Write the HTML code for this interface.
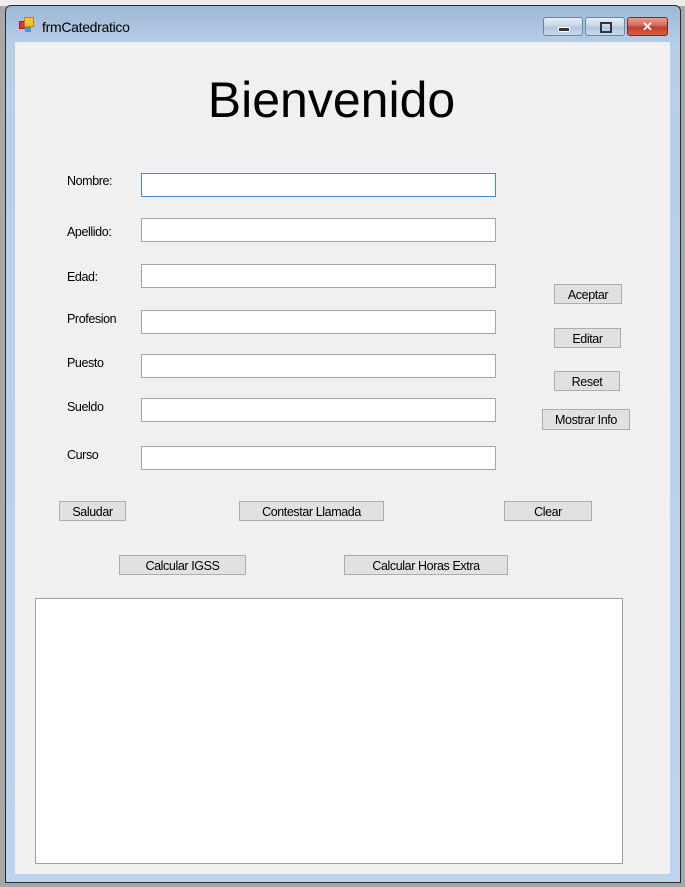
<!DOCTYPE html><html><head><style>
body{margin:0;width:685px;height:887px;background:#a8a8a8;position:relative;overflow:hidden;font-family:"Liberation Sans",Arial,sans-serif}
.top{position:absolute;left:0;top:0;width:685px;height:6px;background:#ececec}
.win{position:absolute;left:5px;top:5px;width:674px;height:876px;border:1px solid #2a2a2a;border-radius:6px 6px 0 0;background:linear-gradient(#9db8d6 0,#b8cfe8 40px,#b7d0ea 150px,#bcd4ed 100%)}
.cl{position:absolute;left:15px;top:42px;width:655px;height:832px;background:#f0f0f0}
.a{position:absolute}
.lbl{position:absolute;font-size:12.5px;color:#000;letter-spacing:-0.4px}
.tb{position:absolute;left:141px;width:353px;height:22px;background:#fff;border:1px solid #a5a5a5}
.btn{position:absolute;background:#e1e1e1;border:1px solid #adadad;box-sizing:border-box;font-size:12.5px;letter-spacing:-0.4px;text-align:center;line-height:20px;color:#000}
.wb{position:absolute;top:17px;height:19px;border:1px solid #6d84a3;border-radius:3px;box-sizing:border-box;background:linear-gradient(#e6eef8,#c4d4e8 50%,#b3c6df 50%,#c8d8ec)}
</style></head><body>
<div class="top"></div>
<div class="win"></div>
<div class="a" style="left:19px;top:21px;width:6px;height:6px;background:#d33;border:1px solid #922"></div>
<div class="a" style="left:24px;top:17px;width:8px;height:8px;background:#f4c430;border:1px solid #b8860b"></div>
<div class="a" style="left:25px;top:27px;width:6px;height:5px;background:#4a90e2"></div>
<div class="a" style="left:42px;top:19px;font-size:14px;color:#000;letter-spacing:-0.3px">frmCatedratico</div>
<div class="wb" style="left:543px;width:40px"><div class="a" style="left:14px;top:9px;width:10px;height:3px;background:#333;border:1px solid #fff"></div></div>
<div class="wb" style="left:585px;width:40px"><div class="a" style="left:14px;top:4px;width:8px;height:7px;border:2px solid #333"></div></div>
<div class="wb" style="left:627px;width:41px;background:linear-gradient(#e8a090,#d06050 50%,#c03a28 50%,#d86048);border-color:#7a2a20;color:#fff;font-weight:bold;font-size:13px;text-align:center;line-height:17px">✕</div>
<div class="cl"></div>
<div class="a" style="left:0;width:663px;top:71px;text-align:center;font-size:50px;color:#000">Bienvenido</div>
<div class="lbl" style="left:67px;top:174px">Nombre:</div>
<div class="lbl" style="left:67px;top:225px">Apellido:</div>
<div class="lbl" style="left:67px;top:270px">Edad:</div>
<div class="lbl" style="left:67px;top:312px">Profesion</div>
<div class="lbl" style="left:67px;top:356px">Puesto</div>
<div class="lbl" style="left:67px;top:400px">Sueldo</div>
<div class="lbl" style="left:67px;top:448px">Curso</div>
<div class="tb" style="top:173px;border-color:#3c8ad8"></div>
<div class="tb" style="top:218px"></div>
<div class="tb" style="top:264px"></div>
<div class="tb" style="top:310px"></div>
<div class="tb" style="top:354px"></div>
<div class="tb" style="top:398px"></div>
<div class="tb" style="top:446px"></div>
<div class="btn" style="left:554px;top:284px;width:68px;height:20px">Aceptar</div>
<div class="btn" style="left:554px;top:328px;width:67px;height:20px">Editar</div>
<div class="btn" style="left:554px;top:371px;width:66px;height:20px">Reset</div>
<div class="btn" style="left:542px;top:409px;width:88px;height:21px">Mostrar Info</div>
<div class="btn" style="left:59px;top:501px;width:67px;height:20px">Saludar</div>
<div class="btn" style="left:239px;top:501px;width:145px;height:20px">Contestar Llamada</div>
<div class="btn" style="left:504px;top:501px;width:88px;height:20px">Clear</div>
<div class="btn" style="left:119px;top:555px;width:127px;height:20px">Calcular IGSS</div>
<div class="btn" style="left:344px;top:555px;width:164px;height:20px">Calcular Horas Extra</div>
<div class="a" style="left:35px;top:598px;width:586px;height:264px;background:#fff;border:1px solid #a0a0a0"></div>
</body></html>
